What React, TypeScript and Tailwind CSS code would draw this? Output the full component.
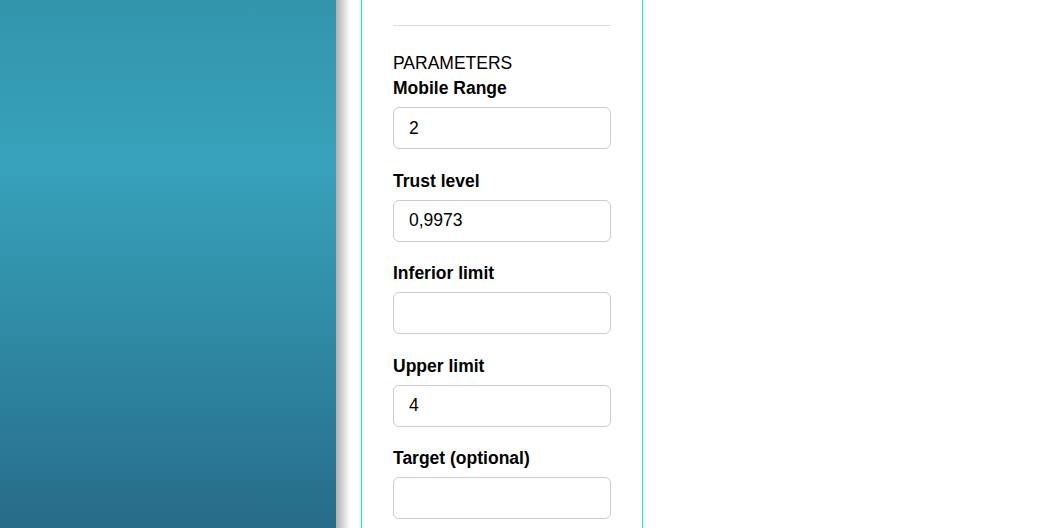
import React from 'react';

const fields = [
  { label: 'Mobile Range', value: '2' },
  { label: 'Trust level', value: '0,9973' },
  { label: 'Inferior limit', value: '' },
  { label: 'Upper limit', value: '4' },
  { label: 'Target (optional)', value: '' },
];

export default function App() {
  return (
    <div
      className="flex h-[528px] w-[1046px] overflow-hidden bg-white text-black"
      style={{ fontFamily: '"Liberation Sans", Arial, sans-serif' }}
    >
      {/* sidebar */}
      <div className="h-full w-[336px] shrink-0 bg-[linear-gradient(to_bottom,#3295ac_0%,#38a2bc_31%,#2f8aa4_63%,#276c89_100%)]" />
      <div className="h-full w-[14px] shrink-0 bg-gradient-to-r from-[#b0b0b0] to-white" />
      <div className="w-[11px] shrink-0" />

      {/* parameter column */}
      <div className="flex h-full w-[282px] shrink-0 flex-col border-x border-[#00f0dc] px-[31px]">
        <div className="mt-[25px] h-px shrink-0 bg-[#dcdcdc]" />
        <div className="mt-[27px] shrink-0 text-[17.5px] leading-[20px]">PARAMETERS</div>
        <div className="mt-[5px] flex shrink-0 flex-col">
          {fields.map((f) => (
            <div key={f.label} className="mb-[21.5px] flex flex-col">
              <label className="text-[17.5px] font-bold leading-[20px]">{f.label}</label>
              <input
                readOnly
                value={f.value}
                className="mt-[9px] h-[42px] w-full rounded-[6px] border border-[#cccccc] px-[15px] text-[17.5px] outline-none"
                style={{ fontFamily: '"Liberation Sans", Arial, sans-serif' }}
              />
            </div>
          ))}
        </div>
      </div>
      <div className="flex-1" />
    </div>
  );
}
